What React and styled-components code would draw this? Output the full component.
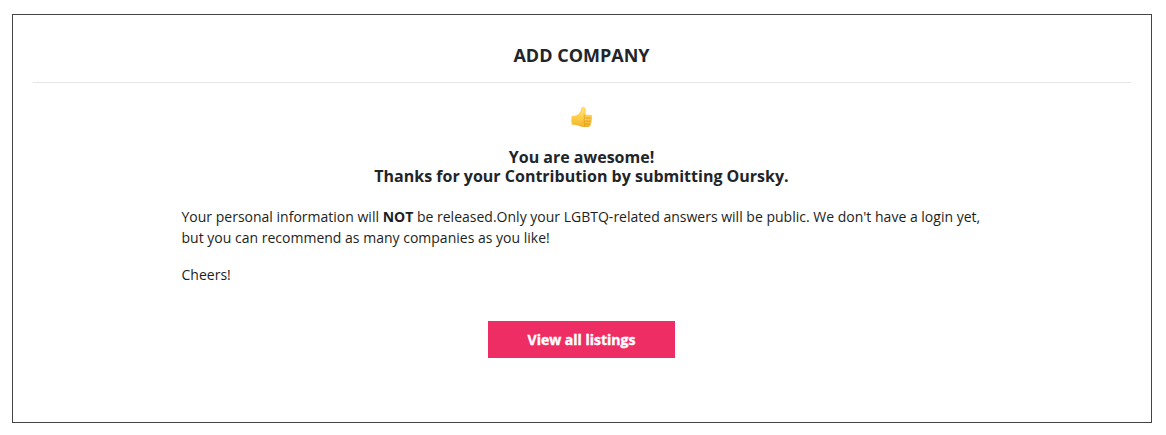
import React from "react";
import styled, { createGlobalStyle } from "styled-components";

const Global = createGlobalStyle`
  * { box-sizing: border-box; }
  body { margin: 0; background: #fff; color: #212529; font-family: "Open Sans", sans-serif; }
`;
const Page = styled.main`
  height: 435px;
  padding: 14px 14px 12px 12px;
`;
const Panel = styled.section`
  height: 409px;
  border: 1px solid #444;
  padding: 0 20px;
`;
const Title = styled.h1`
  margin: 0;
  height: 68px;
  padding: 28px 1px 0 0;
  border-bottom: 1px solid #e5e5e5;
  font-size: 18px;
  line-height: 25px;
  font-weight: 700;
  text-align: center;
`;
const Content = styled.div`
  display: flex;
  flex-direction: column;
  align-items: center;
  padding: 23px 1px 0 0;
`;
const Thumb = styled.svg`
  display: block;
  width: 23px;
  height: 22px;
`;
const Message = styled.h2`
  margin: 20px 0 0;
  font-size: 16px;
  line-height: 19px;
  font-weight: 700;
  text-align: center;
`;
const Copy = styled.div`
  width: 800px;
  margin-top: 20px;
  color: #1c1e21;
  font-size: 14px;
  line-height: 21px;
  letter-spacing: 0.006px;
`;
const Paragraph = styled.p`
  margin: 0 0 16px;
`;
const Button = styled.button`
  width: 187px;
  height: 37px;
  margin-top: 20px;
  padding: 0;
  border: 0;
  background: #ef2d65;
  color: #fff;
  font: 700 14px "Open Sans", sans-serif;
  -webkit-text-stroke: 0.4px #fff;
`;

function ThumbsUp() {
  return (
    <Thumb viewBox="0 0 23 22" aria-hidden="true">
      <defs>
        <linearGradient id="skin" x1="0" y1="0" x2="0" y2="1">
          <stop offset="0" stopColor="#ffdc62" />
          <stop offset="0.6" stopColor="#fccb45" />
          <stop offset="1" stopColor="#f2b32c" />
        </linearGradient>
      </defs>
      <path
        d="M2 9.700C4.800 9.900 7 9.500 8.500 8C10 6.500 10.900 5 11.100 3C11.200 1.400 12.200.6 13.500.9C15.400 1.300 16 3 15.800 5L15.400 8.700H20C21.500 8.700 22.300 9.500 22.200 10.600C22.200 11.300 21.800 11.700 21.400 12C22 12.500 22.200 13.100 22.100 13.800C22 14.500 21.600 14.900 21.100 15.100C21.600 15.600 21.700 16.200 21.500 16.800C21.300 17.500 20.900 17.800 20.400 18C20.800 18.500 20.800 19 20.500 19.600C20.100 20.500 19.400 20.900 18.200 20.900H13.200C11 20.900 9.500 20.400 7.900 19.500C6.600 18.800 4.800 18.700 2.200 18.700C1 16.300 1 12 2 9.700Z"
        fill="url(#skin)"
      />
      <path
        d="M15.600 12H21M15.500 15.100H20.700M15.200 18H20M15.300 8.800C13.900 9.500 13.600 11 15 12C13.700 12.800 13.700 14.300 14.900 15.100C13.800 15.800 13.800 17.300 14.900 18C14.100 18.700 14.100 19.800 15 20.500"
        fill="none"
        stroke="#dc9723"
        strokeWidth=".75"
        strokeLinecap="round"
      />
      <path d="M13.300 2.300C13.800 5 12.700 7 10.800 9" fill="none" stroke="#ffe68b" strokeWidth="1" strokeLinecap="round" />
    </Thumb>
  );
}

export default function App() {
  return (
    <Page>
      <Global />
      <Panel>
        <Title>ADD COMPANY</Title>
        <Content>
          <ThumbsUp />
          <Message>You are awesome!<br />Thanks for your Contribution by submitting Oursky.</Message>
          <Copy>
            <Paragraph>
              Your personal information will <strong>NOT</strong> be released.Only your LGBTQ-related answers will be public. We don't have a login yet,<br />but you can recommend as many companies as you like!
            </Paragraph>
            <Paragraph>Cheers!</Paragraph>
          </Copy>
          <Button>View all listings</Button>
        </Content>
      </Panel>
    </Page>
  );
}
